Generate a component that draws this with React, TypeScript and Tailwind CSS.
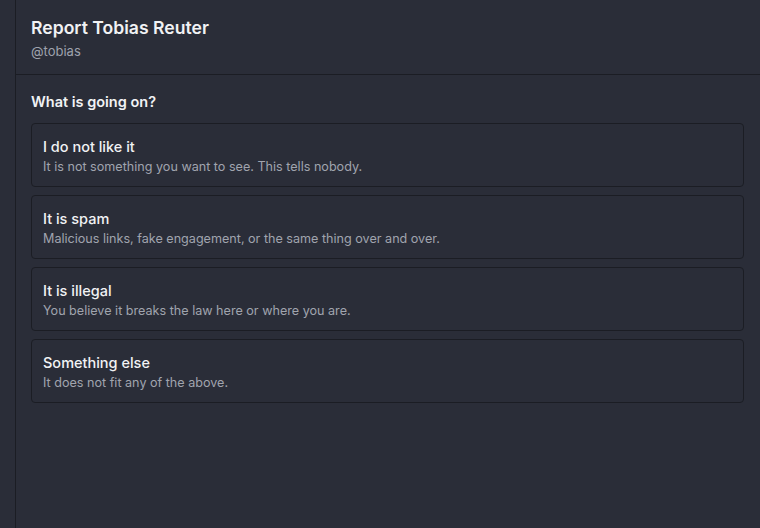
import React from 'react';

const reasons = [
  { title: 'I do not like it', desc: 'It is not something you want to see. This tells nobody.' },
  { title: 'It is spam', desc: 'Malicious links, fake engagement, or the same thing over and over.' },
  { title: 'It is illegal', desc: 'You believe it breaks the law here or where you are.' },
  { title: 'Something else', desc: 'It does not fit any of the above.' },
];

export default function App() {
  return (
    <div
      className="flex h-[528px] w-[760px] bg-[#2a2d38] text-[#f1f2f4]"
      style={{ fontFamily: 'Inter, "Noto Sans", sans-serif' }}
    >
      <div className="w-[16px] shrink-0 border-r border-[#1b1d24] bg-[#2a2d38]" />
      <div className="flex min-w-0 flex-1 flex-col">
        {/* Header */}
        <div className="border-b border-[#1b1d24] px-[15px] pt-[15px] pb-[14px]">
          <h1 className="text-[17.6px] font-semibold leading-[26px]">Report Tobias Reuter</h1>
          <p className="mt-[1px] text-[13px] leading-[18px] text-[#9ea2ad]">@tobias</p>
        </div>

        {/* Body */}
        <div className="px-[15px] pt-[17px]">
          <h2 className="text-[14.5px] font-semibold leading-[20px]">What is going on?</h2>
          <div className="mt-[11px] flex w-[713px] flex-col gap-[8px]">
            {reasons.map((r) => (
              <button
                key={r.title}
                className="flex h-[64px] flex-col justify-center rounded-[4px] border border-[#1b1d24] bg-[#2a2d38] px-[11px] pt-[3px] text-left"
              >
                <span className="text-[14.5px] font-medium leading-[20px]">{r.title}</span>
                <span className="text-[12.6px] leading-[19px] text-[#a0a4ae]">{r.desc}</span>
              </button>
            ))}
          </div>
        </div>
      </div>
    </div>
  );
}
